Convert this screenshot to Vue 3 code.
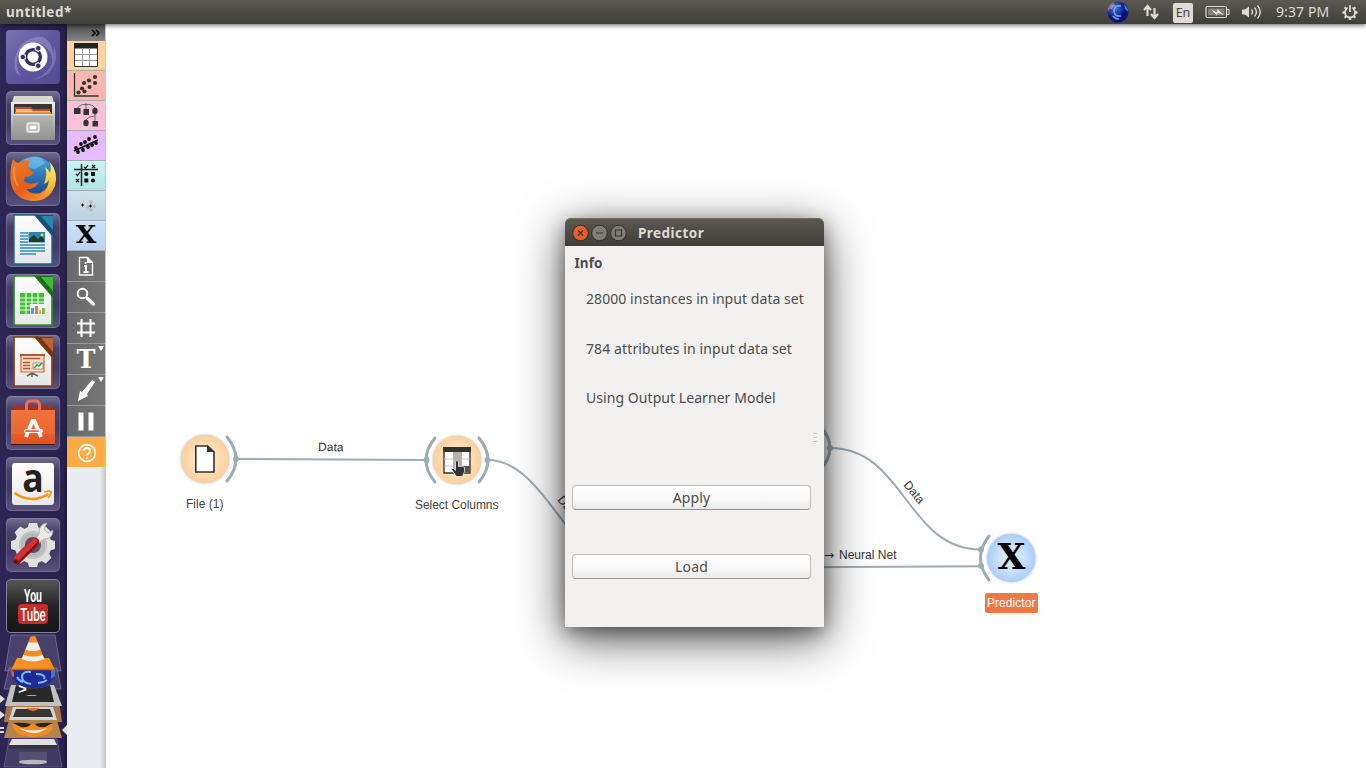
<script setup>
const launcher = [
  { name: 'dash', kind: 'dash', art: `
    <rect width="54" height="54" rx="4" fill="url(#gDash)"/>
    <path d="M10 43C4 22 19 5 37 7c9 4 11 15 10 24C44 18 34 9 22 14 9 20 8 34 15 46z" fill="#b9b2df" opacity=".38"/>
    <path d="M48 16c7 16-5 34-22 33 12-2 20-10 21-23z" fill="#b9b2df" opacity=".3"/>
    <circle cx="27" cy="27" r="14.5" fill="#fff"/>
    <circle cx="27" cy="27" r="7.4" fill="none" stroke="#332d69" stroke-width="3.4"/>
    <path d="M20 27h-5M30.500 21l2.500-4.300M30.500 33l2.500 4.300" stroke="#fff" stroke-width="4.500"/>
    <g fill="#332d69" stroke="#fff" stroke-width=".8"><circle cx="16.800" cy="27" r="2.700"/><circle cx="32.200" cy="18.200" r="2.700"/><circle cx="32.200" cy="35.800" r="2.700"/></g>` },
  { name: 'files', art: `
    <path d="M8 5h38l3 10H5z" fill="#d9d9d6"/><path d="M5 11h44v38H5z" fill="url(#gCab)"/><path d="M8 13h38v13H8z" fill="#3b3430"/>
    <path d="M9 16h16l2 2h17v8H9z" fill="#c5501e"/><path d="M10 18h15l2 2h17v6H10z" fill="#f6c07a"/><path d="M9 21h36v4H9z" fill="#e98a35"/>
    <path d="M7 23h40v26H7z" fill="url(#gFront)"/><path d="M7 23h40v1.5H7z" fill="#ddd"/><rect x="21" y="32" width="12" height="9" rx="2" fill="#c5c5c2" stroke="#efefef" stroke-width="1.4"/><rect x="24" y="35" width="6" height="3" rx="1" fill="#fff"/>` },
  { name: 'firefox', art: `
    <circle cx="28" cy="26" r="21.500" fill="url(#gBlue)"/><path d="M18 8q8-5 17-2l4 5-10 6-8-2z" fill="#85cdf0" opacity=".5"/>
    <path d="M7 7Q9 10 12 11Q17 7 24 9Q22 12 22 16L28 21Q25 25 19 25L18 29Q23 34 33 30Q28 38 20 37Q26 43 34 41Q44 37 44 24Q51 32 46 40Q40 49 27 49Q9 48 5 32Q3 18 7 7z" fill="url(#gFox)"/>
    <path d="M43 9Q53 20 49 34Q45 44 33 46Q42 39 43 28Q41 31 38 32Q42 22 39 15Q43 18 44 21Q46 15 43 9z" fill="url(#gTail)"/>
    <path d="M8 15Q7 26 12 34" fill="none" stroke="#f6a34e" stroke-width="2" opacity=".6"/>` },
  { name: 'writer', art: `<path d="M8 2h24l14 17v32H8z" fill="url(#gPaper)" stroke="#17678f" stroke-width="1.4"/><path d="M28 2h19v22z" fill="#16507a"/><path d="M35 3h12v14z" fill="#2687b4"/>
    <path d="M14 20h8M14 23h8M14 26h8M14 29h8M14 32h25M14 35h25M14 38h25M14 41h16" stroke="#2e8dbb" stroke-width="1.5"/><rect x="22.500" y="19" width="16.500" height="10.500" fill="#2e83ad"/><path d="M23 29v-3l5-4 4 4 3-3 3 3v3z" fill="#183f2c"/><circle cx="36" cy="22" r="1.4" fill="#ffe05a"/>` },
  { name: 'calc', art: `<path d="M8 2h24l14 17v32H8z" fill="url(#gPaper)" stroke="#23961d" stroke-width="1.700"/><path d="M28 2h19v22z" fill="#187018"/><path d="M35 3h12v14z" fill="#43ba34"/>
    <rect x="14" y="19" width="24" height="21" fill="#48bd3d"/><path d="M14 24h24M14 28h24M14 32h24M14 36h24M20 19v21M26 19v21M32 19v21" stroke="#e4ffe0" stroke-width="1.200"/><rect x="24" y="30" width="15" height="11" fill="#f6f6f6"/><path d="M25 34h3v6h-3z" fill="#4d9be0"/><path d="M29 32h3v8h-3z" fill="#e87854"/><path d="M33 36h2v4h-2z" fill="#e3b731"/><path d="M36 34h3v6h-3z" fill="#88bf4c"/>` },
  { name: 'impress', art: `<path d="M8 2h24l14 17v32H8z" fill="url(#gPaper)" stroke="#8d3c12" stroke-width="1.700"/><path d="M28 2h19v22z" fill="#793510"/><path d="M35 3h12v14z" fill="#bd632f"/>
    <path d="M15 20h23v17H15z" fill="#fbdcc9" stroke="#d46832" stroke-width="1.200"/><path d="M14 20h25" stroke="#b44a1c" stroke-width="1.800"/><path d="M17 23.500h17M17 27.500h7M17 30.500h7M17 33.500h7" stroke="#b4552c" stroke-width="1.400"/><path d="M27 28h10v6H27z" fill="#fff" stroke="#777" stroke-width=".8"/><path d="M28 33l3-3 2 1 3-3" fill="none" stroke="#32a133" stroke-width="1.500"/><path d="M26 38v4M26 38l-5 3M26 38l6 3" stroke="#666" stroke-width="1.500"/>` },
  { name: 'software', art: `<path d="M5 14l5-4h34l5 4v35H5z" fill="url(#gBag)"/><path d="M5 14l3-4h38l3 4z" fill="#9d351a"/><path d="M5 15h44v23H5z" fill="#ef743c" opacity=".5"/><path d="M20.500 17v-8q0-4 4-4h5q4 0 4 4v8" fill="none" stroke="#e5734f" stroke-width="3"/><path d="M5 48.500h44" stroke="#3c160b"/>
    <path d="M20 41l6.500-16h2L35 41" fill="none" stroke="#fff" stroke-width="3.800"/><rect x="18" y="33" width="19" height="4" rx="2" fill="#fff"/><rect x="19" y="34.300" width="14" height="1.600" rx=".8" fill="#ef6431"/>` },
  { name: 'amazon', art: `<rect x="6" y="6" width="42" height="42" rx="3" fill="url(#gPaper)"/><text x="27" y="34.500" text-anchor="middle" font-family="Open Sans" font-weight="700" font-size="40" textLength="21.500" lengthAdjust="spacingAndGlyphs" fill="#24211f">a</text><path d="M8.500 36q17 11.500 34 1" fill="none" stroke="#f79413" stroke-width="2.600"/><path d="M38 35q6-2 7 0 0 3-3 6" fill="none" stroke="#f79413" stroke-width="1.800"/>` },
  { name: 'settings', art: `<g fill="#e0e0dd"><circle cx="27" cy="27" r="18.500"/><path d="M23 5h8l2 7H21zM23 49h8l2-7H21z"/><path d="M23 5h8l2 7H21zM23 49h8l2-7H21z" transform="rotate(45 27 27)"/><path d="M23 5h8l2 7H21zM23 49h8l2-7H21z" transform="rotate(90 27 27)"/><path d="M23 5h8l2 7H21zM23 49h8l2-7H21z" transform="rotate(135 27 27)"/></g><circle cx="27" cy="27" r="14" fill="#b9b9b7"/><circle cx="27" cy="27" r="13" fill="none" stroke="#ccc" stroke-width="1"/><circle cx="27" cy="27" r="8" fill="#56516f"/>
    <path d="M29 22l4-6q-1-6 4-10l4-1-3 6 4 4 5-3q0 9-9 9l-6 5z" fill="#e9e9e7" stroke="#aaa" stroke-width=".8"/><path d="M11 42l18-18" stroke="#8e0e10" stroke-width="8.500" stroke-linecap="round"/><path d="M10.500 41l18-18" stroke="#d23234" stroke-width="5.500" stroke-linecap="round"/><circle cx="10" cy="43" r="1.800" fill="#5d1013"/>` },
  { name: 'youtube', kind: 'black', art: `<rect x="1" y="1" width="52" height="52" rx="4" fill="url(#gYt)"/><text x="27" y="22.500" text-anchor="middle" font-family="Roboto" font-weight="700" font-size="18.500" textLength="18" lengthAdjust="spacingAndGlyphs" fill="#fff">You</text><rect x="12" y="25" width="30" height="20" rx="4" fill="#c52d29"/><text x="27" y="41.500" text-anchor="middle" font-family="Roboto" font-weight="500" font-size="18" textLength="25.500" lengthAdjust="spacingAndGlyphs" fill="#fff">Tube</text>` }
]

const categories = [
  { name: 'data', art: `<path d="M7.500 3.500h23v22h-23z" fill="#fff" stroke="#333"/><path d="M7 2h24v5.500H7z" fill="#222"/><path d="M8 13.500h22M8 19.500h22M15.500 8v17M22.500 8v17" stroke="#999" stroke-width="1"/>` },
  { name: 'visualize', art: `<path d="M7.500 2v23h24" fill="none" stroke="#333" stroke-width="1.300"/><g fill="#333"><circle cx="11.500" cy="21.500" r="2.100"/><circle cx="15" cy="17.500" r="2.100"/><circle cx="17.500" cy="20.500" r="2.100"/><circle cx="17" cy="12" r="2.100"/><circle cx="22" cy="9.500" r="2.100"/><circle cx="22.500" cy="16" r="2.100"/><circle cx="28" cy="6" r="2.100"/><circle cx="28" cy="12" r="2.100"/></g>` },
  { name: 'classify', art: `<path d="M10.500 9q0-6 8.500-5.500Q28 3 28 9M19 2v8M19 20q0-4 9-5M28 13v8" fill="none" stroke="#666"/><path d="M7 7h6.500v6H7zM16.500 8h5.500v6h-5.500zM25.500 20h5.500v5.500h-5.500z" fill="#333"/><ellipse cx="28" cy="10" rx="2.700" ry="3.200" fill="#333"/><ellipse cx="19" cy="22" rx="2.700" ry="3.200" fill="#333"/>` },
  { name: 'regression', art: `<path d="M7 20l24-11" stroke="#111" stroke-width="1.700"/><g fill="#111"><circle cx="9" cy="17" r="1.900"/><circle cx="14" cy="13" r="1.900"/><circle cx="18" cy="11" r="1.900"/><circle cx="22" cy="8" r="1.900"/><circle cx="28" cy="6" r="1.900"/><circle cx="29" cy="12" r="1.900"/><circle cx="25" cy="14" r="1.900"/><circle cx="21" cy="16" r="1.900"/><circle cx="16" cy="19" r="1.900"/><circle cx="11" cy="21" r="1.900"/></g>` },
  { name: 'evaluate', art: `<path d="M7 8.500h24M14.500 3v22" stroke="#222" stroke-width="1.500"/><path d="M17 6l1.500 1.500L21 4M9 13l1.500 1.500L13 11M25 4l3 3M28 4l-3 3M9 18l3 3M12 18l-3 3" stroke="#111" stroke-width="1.200" fill="none"/><g fill="#111"><circle cx="19.300" cy="13" r="2.100"/><path d="M24 11h4v4h-4zM17.300 17.500h4v4h-4z"/><circle cx="26" cy="19.500" r="2.100"/></g>` },
  { name: 'cluster', art: `<g fill="#d6d6d6"><circle cx="12" cy="14" r="1.800"/><circle cx="16" cy="10" r="1.800"/><circle cx="18" cy="13" r="1.800"/><circle cx="15" cy="18" r="1.800"/></g><g fill="#b7b7b7"><circle cx="21" cy="16" r="1.800"/><circle cx="24" cy="11" r="1.800"/><circle cx="27" cy="15" r="1.800"/><circle cx="24" cy="19" r="1.800"/></g><path d="M15.500 12.500v3M14 14h3M23.500 13.500v3M22 15h3" stroke="#111"/>` },
  { name: 'extras', art: `<text x="19" y="22" text-anchor="middle" font-family="DejaVu Serif" font-weight="700" font-size="24.500" textLength="20.500" lengthAdjust="spacingAndGlyphs" fill="#000">X</text>` }
]

const tools = [
  { name: 'info', art: `<path d="M12.500 6.500h8l5 5v12.500h-13z" fill="none" stroke="#fff" stroke-width="1.400"/><path d="M20 6v6h6z" fill="#fff"/><path d="M18.500 11v2M17 15h2v6M16.500 21h5" fill="none" stroke="#fff" stroke-width="1.800"/>` },
  { name: 'zoom', art: `<circle cx="15.500" cy="11.500" r="4.800" fill="none" stroke="#fff" stroke-width="1.900"/><path d="M20.500 16.500l6 5.500" stroke="#fff" stroke-width="3.400" stroke-linecap="round"/>` },
  { name: 'grid', art: `<path d="M10 10.500h18M10 19.500h18M14.500 6v18M23.500 6v18" stroke="#fff" stroke-width="2.100"/>` },
  { name: 'text', menu: true, art: `<text x="19" y="24" text-anchor="middle" font-family="DejaVu Serif" font-weight="700" font-size="26" textLength="19" lengthAdjust="spacingAndGlyphs" fill="#fff">T</text>` },
  { name: 'arrow', menu: true, art: `<path d="M25 5l3 2-8 12 1 2-10 5 2-10 2 1z" fill="#fff"/>` },
  { name: 'pause', art: `<path d="M11.500 6.500h5v18h-5zM21.500 6.500h5v18h-5z" fill="#fff"/>` }
]
const info = ['28000 instances in input data set', '784 attributes in input data set', 'Using Output Learner Model']
</script>

<template>
  <div class="desktop">
    <svg class="defs" width="0" height="0">
      <defs>
        <linearGradient id="gDash" x1="0" y1="0" x2="1" y2="1"><stop stop-color="#7b74b0" /><stop offset=".5" stop-color="#6157a0" /><stop offset="1" stop-color="#554a94" /></linearGradient>
        <linearGradient id="gCab" x1="0" y1="0" x2="0" y2="1"><stop stop-color="#eee" /><stop offset="1" stop-color="#888" /></linearGradient>
        <linearGradient id="gFront" x1="0" y1="0" x2="0" y2="1"><stop stop-color="#b4b4b1" /><stop offset="1" stop-color="#92928f" /></linearGradient>
        <linearGradient id="gBlue" x1="0" y1="0" x2="0" y2="1"><stop stop-color="#48a8dd" /><stop offset="1" stop-color="#123c84" /></linearGradient>
        <linearGradient id="gFox" x1="0" y1="0" x2=".7" y2="1"><stop stop-color="#ea7f2f" /><stop offset=".6" stop-color="#e85d18" /><stop offset="1" stop-color="#f8922d" /></linearGradient>
        <linearGradient id="gTail" x1="0" y1="0" x2="0" y2="1"><stop stop-color="#fff08a" /><stop offset=".6" stop-color="#fbc636" /><stop offset="1" stop-color="#f08a24" /></linearGradient>
        <linearGradient id="gBag" x1="0" y1="0" x2="0" y2="1"><stop stop-color="#f2773d" /><stop offset="1" stop-color="#df5122" /></linearGradient>
        <linearGradient id="gPaper" x1="0" y1="0" x2="0" y2="1"><stop stop-color="#fff" /><stop offset="1" stop-color="#e6e6e6" /></linearGradient>
        <linearGradient id="gYt" x1="0" y1="0" x2="0" y2="1"><stop stop-color="#555" /><stop offset=".5" stop-color="#242424" /><stop offset="1" stop-color="#151515" /></linearGradient>
        <radialGradient id="gOrange"><stop stop-color="#ffefdc" /><stop offset=".45" stop-color="#ffe2c1" /><stop offset="1" stop-color="#ffd09a" /></radialGradient>
        <radialGradient id="gSky"><stop stop-color="#deebff" /><stop offset=".45" stop-color="#d0e4ff" /><stop offset="1" stop-color="#a9cefa" /></radialGradient>
        <radialGradient id="gGlobe" cx=".35" cy=".3"><stop stop-color="#4a78dc" /><stop offset="1" stop-color="#07137a" /></radialGradient>
      </defs>
    </svg>

    <header class="topbar">
      <span class="app-title">untitled*</span>
      <div class="tray">
        <svg class="globe" width="22" height="22" viewBox="0 0 22 22"><circle cx="11" cy="11" r="10.500" fill="url(#gGlobe)" /><path d="M1 11Q0 4 7 1.300L6 5 2.500 8z" fill="#a5708f" /><path d="M17 3q4 3 4.300 8L18 8z" fill="#3f7fd8" /><path d="M14 5q-7-1-7 5t7 5M4 8q1-3 4-4M6 15q2 3 6 3" fill="none" stroke="#7fb0f0" stroke-width="1.600" opacity=".85" /></svg>
        <svg class="net" width="18" height="18" viewBox="0 0 18 18"><path d="M5.500 13V3M2 7l3.500-4L9 7M12.500 5v10M9 11l3.500 4L16 11" fill="none" stroke="#dfdbd2" stroke-width="2.200" /></svg>
        <span class="lang">En</span>
        <svg class="battery" width="26" height="14" viewBox="0 0 26 14"><rect x="1" y="1.500" width="20.500" height="11" rx="1.500" fill="none" stroke="#dfdbd2" stroke-width="1.200" /><rect x="3" y="3.500" width="16.500" height="7" fill="#85827a" /><path d="M22 4.500h2v5h-2" fill="none" stroke="#dfdbd2" /><path d="M6 4.500l6 3 .5-3.500 6 6-6-2.500-.5 3z" fill="#eee" /></svg>
        <svg class="sound" width="22" height="16" viewBox="0 0 22 16"><path d="M1 5.500h3l4-3v11l-4-3H1z" fill="#dfdbd2" /><path d="M10.500 5.500q2 2.500 0 5M13.500 3.500q4 4.500 0 9M16.500 1.500q5.500 6.500 0 13" fill="none" stroke="#dfdbd2" stroke-width="1.400" /></svg>
        <span class="clock">9:37 PM</span>
        <svg class="power" width="18" height="18" viewBox="0 0 18 18"><circle cx="9" cy="9.500" r="5" fill="none" stroke="#dfdbd2" stroke-width="1.800" /><path d="M9 17v-2.500M1.500 9.500H4M14 9.500h2.500M3.700 4.200l1.500 1.500M14.300 4.200l-1.500 1.500M3.700 14.800l1.500-1.500M14.300 14.800l-1.500-1.500" stroke="#dfdbd2" stroke-width="2.300" /><path d="M9 1.500v7" stroke="#4b4a44" stroke-width="4.500" /><path d="M9 2v7" stroke="#dfdbd2" stroke-width="1.800" /></svg>
      </div>
    </header>

    <div class="work">
      <nav class="launcher">
        <div v-for="item in launcher" :key="item.name" class="tile" :class="item.kind">
          <svg width="54" height="54" viewBox="0 0 54 54" v-html="item.art"></svg>
        </div>
        <svg class="stack" width="67" height="135" viewBox="0 633 67 135">
          <g stroke="#8e89a8" stroke-opacity=".6">
            <path d="M11 635h44l6 36H5z" fill="#7f79a0" fill-opacity=".35" />
            <path d="M9 668h48l4 21H4z" fill="#625b89" fill-opacity=".5" />
          </g>
          <path d="M8 694h50l4 28H4z" fill="#a8784a" />
          <path d="M12 670q0 18 21 18t22-18z" fill="#1d2b99" />
          <path d="M31 672q-9-1-9 5t9 7M36 674q10 0 8 5M17 677q2 4 6 5M38 683q5 0 9-3" fill="none" stroke="#86b7e9" stroke-width="2" />
          <path d="M11 670l3 2v5l-2-1z" fill="#c4607f" /><path d="M51 670h4v6l-4 3z" fill="#3c78ca" />
          <path d="M17 658h32l6 12H11z" fill="#f8921e" />
          <path d="M11 669.500h44" stroke="#d85e08" stroke-width="1.500" />
          <path d="M30.500 636.500q2.500-1 5 0l9.500 24q-12 6-24 0z" fill="#f58d22" />
          <path d="M28.500 642.500h9l3 7q-8 3-15 0zM23.500 655q9.500 3 19 0l2 4q-11.500 5-23 0z" fill="#eee" />
          <path d="M11 685h5q16 8 34 0h4l8 21H5z" fill="#c2c0bf" />
          <path d="M16 685q17 7 34 0l4 17H12z" fill="#272827" />
          <text class="prompt" x="18" y="694">&gt;_</text>
          <path d="M13 707h40l4 13H9z" fill="#d3d3d3" /><path d="M16 709h34l3 8H13z" fill="#363636" />
          <path d="M26 708q7 6 14 0z" fill="#ea762c" />
          <path d="M9 720h48l5 18H4z" fill="#b3844c" />
          <path d="M13 724q-1 12 20 13 21-1 20-13z" fill="#f18b29" />
          <path d="M13 723q9-1 18 1-3 4-10 3zM53 723q-9-1-18 1 3 4 10 3z" fill="#302314" />
          <path d="M19 728q14 5 28 0-12 10-28 0z" fill="#fff7e8" />
          <path d="M9 739h48l5 28H4z" fill="#777397" fill-opacity=".3" stroke="#8e89a8" stroke-opacity=".4" />
          <path d="M12 739h42l3 6H9z" fill="#e0e0e0" /><path d="M9 745h48v3.500H9z" fill="#353535" />
          <path d="M19 752h28v12H19z" fill="#74718b" opacity=".4" /><ellipse cx="33" cy="762" rx="14" ry="2.300" fill="#b9b9bd" />
          <path d="M0 695l5 4-5 4zM0 711l5 4-5 4zM67 725l-5 5 5 5z" fill="#ddd" /><path d="M0 728h4M0 732h4" stroke="#ddd" stroke-width="2" />
        </svg>
      </nav>

      <aside class="dock">
        <div class="dock-head"><svg width="10" height="8" viewBox="0 0 10 8"><path d="M1 1l3 3-3 3M5 1l3 3-3 3" fill="none" stroke="#000" stroke-width="1.500" /></svg></div>
        <div v-for="cat in categories" :key="cat.name" class="cat" :class="cat.name"><svg width="38" height="29" viewBox="0 0 38 29" v-html="cat.art"></svg></div>
        <div v-for="tool in tools" :key="tool.name" class="tool">
          <svg width="38" height="30" viewBox="0 0 38 30"><g v-html="tool.art"></g><path v-if="tool.menu" d="M31 2h6l-3 5z" fill="#fff" /></svg>
        </div>
        <div class="help"><svg width="38" height="30" viewBox="0 0 38 30"><circle cx="20" cy="16" r="8.300" fill="none" stroke="#fff" stroke-width="1.700" /><path d="M17 14q0-3 3-3t3 3q0 1.500-1.500 2.500T20 18.500M20 20v2" fill="none" stroke="#fff" stroke-width="2" /></svg></div>
      </aside>

      <main class="canvas">
        <svg class="flow" width="1260" height="744" viewBox="106 24 1260 744">
          <g class="links">
            <path d="M236 459L427 460" />
            <path d="M488 460C548 460 575 580 640 580" />
            <path d="M830 448C905 448 906 549.500 981 549.500" />
            <path d="M800 567.300L981 566.300" />
          </g>
          <g class="anchors">
            <path d="M227 437Q245 459 227 481" />
            <path d="M435 438Q417 460 435 482" />
            <path d="M479 438Q497 460 479 482" />
            <path d="M820 426Q840 448 820 470" />
            <path d="M989 536Q972 558 989 580" />
          </g>
          <g class="dots">
            <circle cx="236" cy="459" r="3" /><circle cx="426.500" cy="460" r="3" /><circle cx="487.500" cy="460" r="3" /><circle cx="830" cy="448" r="3" /><circle cx="981" cy="549.500" r="3" /><circle cx="981" cy="566" r="3" />
          </g>
          <circle class="node" cx="205" cy="459" r="24" fill="url(#gOrange)" />
          <circle class="node" cx="457" cy="460" r="24" fill="url(#gOrange)" />
          <circle class="node" cx="1011.300" cy="558" r="24" fill="url(#gSky)" />
          <path d="M195.800 446h11.700l6.500 6v20h-18.200z" fill="#fff" stroke="#333" stroke-width="1.600" /><path d="M207 445l8 7h-8z" fill="#333" />
          <path d="M444 448h26v25h-26z" fill="#fff" stroke="#333" stroke-width="1.400" /><path d="M453 452h9v20h-9z" fill="#b5b0ad" /><path d="M444 459h26M444 466h26" stroke="#bbb" stroke-width=".8" /><path d="M443 447h28v5h-28z" fill="#333" /><path d="M463 466h7v6h-7z" fill="#555" />
          <path d="M455.500 461.500q1.500-2 3 0v5q5-1 6 1v4l-2 5h-6l-5-7q0-2 2-1l2 2z" fill="#333" stroke="#fff" stroke-width=".7" />
          <text class="glyph" x="1011.500" y="569" textLength="28" lengthAdjust="spacingAndGlyphs">X</text>
          <text x="186" y="508" textLength="37.500">File (1)</text>
          <text x="415" y="509" textLength="83.500">Select Columns</text>
          <text class="link-text" x="318" y="451" transform="rotate(.5 318 451)" textLength="25.500">Data</text>
          <text class="link-text" x="557" y="500" transform="rotate(50 557 500)" textLength="25.500">Data</text>
          <text class="link-text" x="903" y="485" transform="rotate(51 903 485)" textLength="25.500">Data</text>
          <text class="link-text arrow-text" x="824" y="559">→</text>
          <text class="link-text" x="839" y="559" textLength="57.500">Neural Net</text>
          <rect x="985" y="593" width="53" height="20" rx="2" fill="#f07847" />
          <text class="selected" x="987" y="607" textLength="48.500">Predictor</text>
        </svg>
      </main>
    </div>

    <section class="dialog">
      <header class="titlebar">
        <svg width="56" height="20" viewBox="0 0 56 20"><g stroke="#33322e"><circle cx="8.500" cy="10" r="7.800" fill="#e65d2e" /><circle cx="27.500" cy="10" r="7.800" fill="#7e7c75" /><circle cx="46.500" cy="10" r="7.800" fill="#7e7c75" /></g><path d="M6 7.500l5 5M11 7.500l-5 5M24 10h7M43.500 7h6v6h-6z" fill="none" stroke="#373632" stroke-width="1.200" /></svg>
        <h1>Predictor</h1>
      </header>
      <h2>Info</h2>
      <ul><li v-for="(line, i) in info" :key="line" :class="'line' + i">{{ line }}</li></ul>
      <div class="actions"><button>Apply</button><button>Load</button></div>
      <div class="grip"><i></i><i></i><i></i></div>
    </section>
  </div>
</template>

<style>
html, body { margin: 0; overflow: hidden; }
</style>

<style scoped>
.desktop { position: relative; width: 1366px; height: 768px; overflow: hidden; display: flex; flex-direction: column; background: #fff; font-family: "Noto Sans", "Open Sans", sans-serif; }
.defs { position: absolute; }
svg { display: block; flex: none; }
.topbar { position: relative; z-index: 2; flex: none; height: 24px; box-sizing: border-box; padding: 0 7px 0 6px; display: flex; align-items: center; justify-content: space-between; color: #dfdbd2; background: linear-gradient(#5b5952, #3f3e39); box-shadow: 0 1px 5px rgba(0, 0, 0, .65); }
.app-title { font-size: 13.5px; font-weight: 700; line-height: 24px; letter-spacing: .5px; }
.tray { display: flex; align-items: center; height: 24px; }
.net { margin-left: 13px; }
.lang { margin-left: 13px; width: 20px; height: 20px; margin-top: 1px; border-radius: 2px; background: #dfdbd2; color: #45443f; font-size: 12.5px; line-height: 20px; text-align: center; }
.battery { margin-left: 12px; }
.sound { margin-left: 10px; }
.clock { margin-left: 13px; width: 55px; font-size: 14px; line-height: 24px; letter-spacing: .1px; white-space: nowrap; }
.power { margin-left: 10px; }
.work { flex: 1; display: flex; min-height: 0; }
.launcher { width: 67px; flex: none; height: 744px; box-sizing: border-box; padding-top: 6px; display: flex; flex-direction: column; align-items: center; background: linear-gradient(90deg, #2d2654, #29224c 94%, #211b3c); position: relative; }
.tile { width: 54px; height: 54px; margin-bottom: 7px; margin-right: 1px; flex: none; border-radius: 5px; background: linear-gradient(#746f91, #474068 24%, #3f3866 60%, #59527d); box-shadow: inset 0 0 0 1px rgba(175, 169, 201, .3); }
.tile svg { overflow: visible; }
.tile.black { background: #77728f; }
.stack { position: absolute; left: 0; bottom: 0; }
.prompt { font: 700 15px "Liberation Mono", monospace; fill: #fff; }
.dock { width: 39px; flex: none; display: flex; flex-direction: column; box-sizing: border-box; background: linear-gradient(90deg, #e9edf2 85%, #c9cdd1); position: relative; z-index: 1; border-right: 1px solid #c4c8cb; }
.dock-head { height: 17px; box-sizing: border-box; display: flex; justify-content: flex-end; align-items: center; padding-right: 4px; background: linear-gradient(#4c4c4c, #858585); }
.cat { height: 29px; border-bottom: 1px solid #aaa; }
.data { background: #ffd39f; }
.visualize { background: #ffb7b1; }
.classify { background: #fac1d9; }
.regression { background: #e5bbfb; }
.evaluate { background: linear-gradient(#c7f6f6, #b4e3e3); }
.cluster { background: linear-gradient(#cee2ee, #bdd2df); }
.extras { background: linear-gradient(#cbe1ff, #bbd3f0); }
.tool { height: 30px; border-bottom: 1px solid #989898; background: linear-gradient(90deg, #686868, #777); }
.help { height: 30px; background: #ffaa43; }
.canvas { flex: 1; min-width: 0; background: #fff; box-shadow: -1px 0 5px rgba(0, 0, 0, .3); }
.flow text { font: 12px "Liberation Sans", Arial, sans-serif; fill: #444; }
.flow .link-text { fill: #333; }
.flow .arrow-text { font-family: "DejaVu Sans", sans-serif; }
.flow .selected { fill: #fff; }
.flow .glyph { font: 700 35px "DejaVu Serif", serif; text-anchor: middle; fill: #000; }
.links path { fill: none; stroke: #9cacb4; stroke-width: 2; }
.anchors path { fill: none; stroke: #9cacb4; stroke-width: 3; stroke-linecap: round; }
.dots circle { fill: #9cacb4; }
.node { filter: drop-shadow(0 0 1.5px #aab6bd); }
.dialog { position: absolute; z-index: 3; left: 565px; top: 218px; width: 259px; height: 409px; background: #f2f1f0; color: #4c4c4c; border-radius: 6px 6px 0 0; box-shadow: 0 12px 48px rgba(0, 0, 0, .66), 0 5px 18px rgba(0, 0, 0, .38); }
.titlebar { height: 28px; box-sizing: border-box; padding: 1px 0 0 7px; display: flex; align-items: center; background: linear-gradient(#5c5a52, #3e3d38); box-shadow: inset 0 1px #73705f; border-radius: 6px 6px 0 0; }
h1 { margin: 0 0 0 10px; color: #dfdbd2; font-size: 13.5px; line-height: 20px; letter-spacing: .45px; }
h2 { margin: 7px 0 0 9.5px; font-size: 13.5px; line-height: 20px; letter-spacing: .1px; }
ul { list-style: none; margin: 16px 0 0 21px; padding: 0; display: flex; flex-direction: column; gap: 29.5px; }
li { font-size: 14px; line-height: 20px; white-space: nowrap; letter-spacing: .06px; }
.line1 { letter-spacing: .11px; }
.actions { display: flex; flex-direction: column; gap: 44px; margin: 77px 13px 0 7px; }
button { display: block; width: 239px; height: 25px; padding: 0; border: 1px solid #c2bdb9; border-bottom-color: #969390; border-radius: 4px; background: linear-gradient(#fff, #fafafa 55%, #ebeae9); color: #4c4c4c; font: 14px/22px "Noto Sans", sans-serif; letter-spacing: .15px; }
.grip { position: absolute; right: 7px; top: 215px; width: 4px; display: flex; flex-direction: column; gap: 2px; }
.grip i { height: 1px; background: #c7c4c1; border-bottom: 1px solid #fff; }
</style>
